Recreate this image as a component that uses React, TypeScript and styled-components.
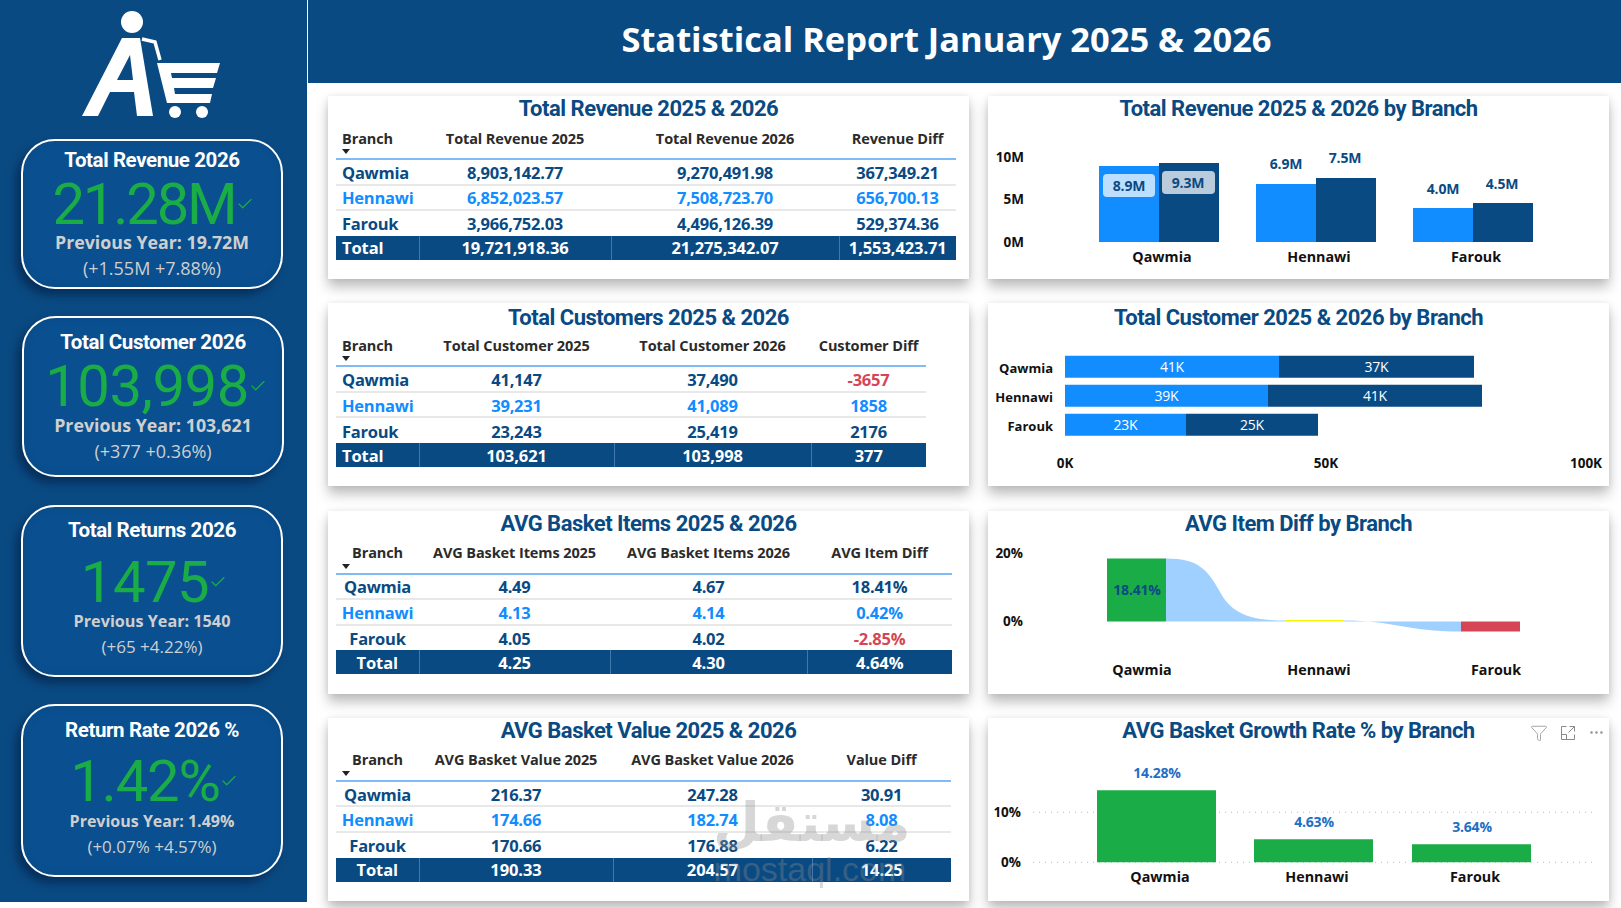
import React from 'react';
import styled, { createGlobalStyle } from 'styled-components';
import { Check, Filter, MoreHorizontal } from 'lucide-react';

const NAVY = '#0a4a82';
const SKY = '#118dff';
const GREEN = '#1aad47';
const RED = '#d64554';

const GlobalStyle = createGlobalStyle`
  html, body {
    margin: 0;
    padding: 0;
    background: #ffffff;
  }
  * {
    box-sizing: border-box;
  }
`;

const Page = styled.div`
  position: relative;
  width: 1621px;
  height: 908px;
  display: flex;
  align-items: flex-start;
  overflow: hidden;
  background: #ffffff;
  font-family: 'Open Sans', sans-serif;
`;

const Sidebar = styled.aside`
  width: 307px;
  height: 902px;
  flex-shrink: 0;
  background: ${NAVY};
  display: flex;
  flex-direction: column;
  padding-left: 21px;
`;

const LogoMark = styled.svg`
  display: block;
  width: 286px;
  height: 139px;
  flex-shrink: 0;
`;

const Kpi = styled.div<{ $height: number; $gap: number; $pad: number; $shift: number }>`
  width: 262px;
  height: ${p => p.$height}px;
  margin-top: ${p => p.$gap}px;
  margin-left: ${p => p.$shift}px;
  padding-top: ${p => p.$pad}px;
  background: #0a4f8f;
  border: 2.5px solid #ffffff;
  border-radius: 34px;
  box-shadow: -5px 6px 8px rgba(3, 30, 66, 0.6), inset 0 0 6px rgba(10, 74, 130, 0.8);
  display: flex;
  flex-direction: column;
  align-items: center;
  flex-shrink: 0;
`;

const KpiTitle = styled.div`
  height: 24px;
  line-height: 24px;
  font-family: 'Roboto', sans-serif;
  font-size: 20.5px;
  font-weight: 700;
  letter-spacing: -0.4px;
  color: #ffffff;
`;

const KpiValueRow = styled.div<{ $top: number; $after: number; $nudge: number }>`
  height: 60px;
  margin-top: ${p => p.$top}px;
  margin-bottom: ${p => p.$after}px;
  padding-left: ${p => p.$nudge}px;
  display: flex;
  align-items: center;
  color: ${GREEN};
`;

const KpiValue = styled.span<{ $track: number }>`
  font-family: 'Roboto', sans-serif;
  font-size: 58px;
  font-weight: 400;
  line-height: 60px;
  letter-spacing: ${p => p.$track}px;
`;

const KpiPrev = styled.div<{ $size: number }>`
  height: 24px;
  line-height: 24px;
  font-size: ${p => p.$size}px;
  font-weight: 700;
  color: #cfcfcf;
`;

const KpiDelta = styled.div<{ $size: number }>`
  margin-top: 2px;
  height: 24px;
  line-height: 24px;
  font-size: ${p => p.$size}px;
  font-weight: 400;
  color: #cfcfcf;
`;

const Main = styled.main`
  flex: 1;
  margin-left: 1px;
  display: flex;
  flex-direction: column;
`;

const Header = styled.header`
  height: 83px;
  background: ${NAVY};
  display: flex;
  align-items: center;
  justify-content: center;
  padding: 0 36px 7px 0;
`;

const HeaderTitle = styled.h1`
  margin: 0;
  font-family: 'Open Sans', sans-serif;
  font-size: 34.45px;
  font-weight: 700;
  color: #ffffff;
`;

const Board = styled.div`
  display: grid;
  grid-template-columns: 641px 621px;
  grid-auto-rows: 183px;
  column-gap: 19px;
  row-gap: 24.25px;
  padding: 13px 0 0 20px;
`;

const Card = styled.section`
  position: relative;
  background: #ffffff;
  box-shadow: 0 8px 12px rgba(0, 0, 0, 0.26), 0 0 6px rgba(0, 0, 0, 0.08);
`;

const CardTitle = styled.h2<{ $line?: number }>`
  margin: 0;
  height: 28px;
  line-height: ${p => p.$line || 26}px;
  text-align: center;
  font-family: 'Roboto', sans-serif;
  font-size: 22px;
  font-weight: 700;
  letter-spacing: -0.5px;
  color: ${NAVY};
`;

const Table = styled.table<{ $width: number }>`
  width: ${p => p.$width}px;
  margin-left: 8px;
  table-layout: fixed;
  border-collapse: collapse;
`;

const HeadCell = styled.th<{ $left?: boolean }>`
  position: relative;
  height: 35px;
  padding: 0 0 6px ${p => (p.$left ? '6px' : '0')};
  border-bottom: 2px solid #7fbcf5;
  text-align: ${p => (p.$left ? 'left' : 'center')};
  font-size: 14.5px;
  font-weight: 700;
  letter-spacing: -0.1px;
  color: #2b2b2b;
  white-space: nowrap;
`;

const SortCaret = styled.span`
  position: absolute;
  left: 6px;
  bottom: 4px;
  width: 0;
  height: 0;
  border-left: 4.5px solid transparent;
  border-right: 4.5px solid transparent;
  border-top: 5px solid #222222;
`;

const Cell = styled.td<{ $color: string; $left?: boolean }>`
  height: 25.6px;
  padding: 2px 0 0 ${p => (p.$left ? '6px' : '0')};
  border-bottom: 2px solid #e8e8e8;
  text-align: ${p => (p.$left ? 'left' : 'center')};
  font-size: 16.5px;
  font-weight: 700;
  letter-spacing: -0.25px;
  line-height: 20px;
  color: ${p => p.$color};
  white-space: nowrap;
  tr:nth-child(3) > & {
    border-bottom: 0;
  }
`;

const TotalCell = styled.td<{ $left?: boolean }>`
  height: 24px;
  padding: 1px 0 0 ${p => (p.$left ? '6px' : '0')};
  background: ${NAVY};
  border-left: 1px solid #3f78ad;
  text-align: ${p => (p.$left ? 'left' : 'center')};
  font-size: 16.5px;
  font-weight: 700;
  letter-spacing: -0.1px;
  line-height: 20px;
  color: #ffffff;
  white-space: nowrap;
  &:first-child {
    border-left: 0;
  }
`;

const ChartSvg = styled.svg`
  display: block;
  width: 621px;
  height: 154px;
  font-family: 'Open Sans', sans-serif;
`;

const AxisText = styled.text`
  font-size: 13.5px;
  font-weight: 700;
  fill: #111111;
`;

const CategoryText = styled.text<{ $size?: number }>`
  font-size: ${p => p.$size || 14.3}px;
  font-weight: 700;
  fill: #111111;
`;

const BarText = styled.text<{ $color?: string; $weight?: number }>`
  font-size: 14px;
  font-weight: ${p => p.$weight || 700};
  letter-spacing: -0.2px;
  fill: ${p => p.$color || NAVY};
`;

const VisualTools = styled.div`
  position: absolute;
  top: 6px;
  right: 4px;
  display: flex;
  align-items: center;
  gap: 12px;
  color: #8a8a8a;
`;

const Watermark = styled.div`
  position: absolute;
  left: 713px;
  top: 792px;
  width: 194px;
  text-align: center;
  color: rgba(140, 140, 140, 0.35);
  pointer-events: none;
`;

const WatermarkArabic = styled.div`
  height: 62px;
  line-height: 62px;
  font-family: 'DejaVu Sans', sans-serif;
  font-size: 54px;
  font-weight: 700;
  white-space: nowrap;
`;

const WatermarkLatin = styled.div`
  height: 30px;
  line-height: 30px;
  font-family: 'Liberation Sans', sans-serif;
  font-size: 34px;
  white-space: nowrap;
`;

const kpis = [
  { title: 'Total Revenue 2026', value: '21.28M', prev: 'Previous Year: 19.72M', delta: '(+1.55M +7.88%)', height: 150, gap: 0, pad: 7, top: 2, after: -4, track: -2.2, shift: 0, nudge: 2, prevSize: 17.8, deltaSize: 18 },
  { title: 'Total Customer 2026', value: '103,998', prev: 'Previous Year: 103,621', delta: '(+377 +0.36%)', height: 161, gap: 27, pad: 12, top: 2, after: -3, track: -0.5, shift: 1, nudge: 6, prevSize: 17.8, deltaSize: 18 },
  { title: 'Total Returns 2026', value: '1475', prev: 'Previous Year: 1540', delta: '(+65 +4.22%)', height: 172, gap: 28, pad: 11, top: 10, after: -3, track: -0.5, shift: 0, nudge: 4, prevSize: 16.2, deltaSize: 17 },
  { title: 'Return Rate 2026 %', value: '1.42%', prev: 'Previous Year: 1.49%', delta: '(+0.07% +4.57%)', height: 173, gap: 27, pad: 12, top: 9, after: -2, track: -1.2, shift: 0, nudge: 4, prevSize: 16, deltaSize: 17 },
];

type TableData = {
  title: string;
  titleLine?: number;
  left: boolean;
  cols: number[];
  heads: string[];
  rows: string[][];
  total: string[];
};

const tables: TableData[] = [
  {
    title: 'Total Revenue 2025 & 2026',
    left: true,
    cols: [83, 192, 228, 117],
    heads: ['Branch', 'Total Revenue 2025', 'Total Revenue 2026', 'Revenue Diff'],
    rows: [
      ['Qawmia', '8,903,142.77', '9,270,491.98', '367,349.21'],
      ['Hennawi', '6,852,023.57', '7,508,723.70', '656,700.13'],
      ['Farouk', '3,966,752.03', '4,496,126.39', '529,374.36'],
    ],
    total: ['Total', '19,721,918.36', '21,275,342.07', '1,553,423.71'],
  },
  {
    title: 'Total Customers 2025 & 2026',
    titleLine: 29,
    left: true,
    cols: [83, 195, 197, 115],
    heads: ['Branch', 'Total Customer 2025', 'Total Customer 2026', 'Customer Diff'],
    rows: [
      ['Qawmia', '41,147', '37,490', '-3657'],
      ['Hennawi', '39,231', '41,089', '1858'],
      ['Farouk', '23,243', '25,419', '2176'],
    ],
    total: ['Total', '103,621', '103,998', '377'],
  },
  {
    title: 'AVG Basket Items 2025 & 2026',
    left: false,
    cols: [83, 191, 197, 145],
    heads: ['Branch', 'AVG Basket Items 2025', 'AVG Basket Items 2026', 'AVG Item Diff'],
    rows: [
      ['Qawmia', '4.49', '4.67', '18.41%'],
      ['Hennawi', '4.13', '4.14', '0.42%'],
      ['Farouk', '4.05', '4.02', '-2.85%'],
    ],
    total: ['Total', '4.25', '4.30', '4.64%'],
  },
  {
    title: 'AVG Basket Value 2025 & 2026',
    left: false,
    cols: [83, 194, 199, 139],
    heads: ['Branch', 'AVG Basket Value 2025', 'AVG Basket Value 2026', 'Value Diff'],
    rows: [
      ['Qawmia', '216.37', '247.28', '30.91'],
      ['Hennawi', '174.66', '182.74', '8.08'],
      ['Farouk', '170.66', '176.88', '6.22'],
    ],
    total: ['Total', '190.33', '204.57', '14.25'],
  },
];

const Logo = () => (
  <LogoMark viewBox="21 0 286 139">
    <circle cx="132" cy="22" r="11" fill="#fff" />
    <path
      fill="#fff"
      fillRule="evenodd"
      d="M82 116 L122 38 L140 38 L153 116 L137 116 L134 92 L110 92 L98 116 Z M117 80 L133 80 L130 55 Z"
    />
    <path d="M142 39 L155 42 L160 60" fill="none" stroke="#fff" strokeWidth="3.5" />
    <path
      fill="#fff"
      d="M157 63 H220 L217 73 H171 L172 78 H216 L213 88 H174 L175 94 H212 L210 103 H167 Z"
    />
    <circle cx="175" cy="112" r="6" fill="#fff" />
    <circle cx="202" cy="112" r="6" fill="#fff" />
  </LogoMark>
);

const KpiCard = ({ kpi }: { kpi: (typeof kpis)[number] }) => (
  <Kpi $height={kpi.height} $gap={kpi.gap} $pad={kpi.pad} $shift={kpi.shift}>
    <KpiTitle>{kpi.title}</KpiTitle>
    <KpiValueRow $top={kpi.top} $after={kpi.after} $nudge={kpi.nudge}>
      <KpiValue $track={kpi.track}>{kpi.value}</KpiValue>
      <Check size={18} strokeWidth={1.6} />
    </KpiValueRow>
    <KpiPrev $size={kpi.prevSize}>{kpi.prev}</KpiPrev>
    <KpiDelta $size={kpi.deltaSize}>{kpi.delta}</KpiDelta>
  </Kpi>
);

const diffColor = (value: string, base: string) => (value.startsWith('-') ? RED : base);

const DataTable = ({ data }: { data: TableData }) => (
  <Card>
    <CardTitle $line={data.titleLine}>{data.title}</CardTitle>
    <Table $width={data.cols.reduce((a, b) => a + b, 0)}>
      <colgroup>
        {data.cols.map((w, i) => (
          <col key={i} width={w} />
        ))}
      </colgroup>
      <thead>
        <tr>
          {data.heads.map((h, i) => (
            <HeadCell key={h} $left={i === 0 && data.left}>
              {h}
              {i === 0 && <SortCaret />}
            </HeadCell>
          ))}
        </tr>
      </thead>
      <tbody>
        {data.rows.map(row => {
          const base = row[0] === 'Hennawi' ? SKY : NAVY;
          return (
            <tr key={row[0]}>
              {row.map((v, i) => (
                <Cell key={i} $left={i === 0 && data.left} $color={diffColor(v, base)}>
                  {v}
                </Cell>
              ))}
            </tr>
          );
        })}
        <tr>
          {data.total.map((v, i) => (
            <TotalCell key={i} $left={i === 0 && data.left}>
              {v}
            </TotalCell>
          ))}
        </tr>
      </tbody>
    </Table>
  </Card>
);

// chart numbers are page coordinates, each viewBox starts where its svg sits
const RevenueChart = () => {
  const bars = [
    [1099, 166, 1159, 163, 'Qawmia', 1162],
    [1256, 184, 1316, 178, 'Hennawi', 1319],
    [1413, 208, 1473, 203, 'Farouk', 1476],
  ] as const;
  return (
    <ChartSvg viewBox="988 124 621 154">
      {[['10M', 157], ['5M', 199], ['0M', 242]].map(([t, y]) => (
        <AxisText key={t} x={1024} y={y} textAnchor="end" dominantBaseline="central">{t}</AxisText>
      ))}
      {bars.map(([x1, y1, x2, y2, name, cx]) => (
        <g key={name}>
          <rect x={x1} y={y1} width={60} height={242 - y1} fill={SKY} />
          <rect x={x2} y={y2} width={60} height={242 - y2} fill={NAVY} />
          <CategoryText x={cx} y={256} textAnchor="middle" dominantBaseline="central">{name}</CategoryText>
        </g>
      ))}
      <rect x={1103} y={174} width={52} height={23} rx={4} fill="#fff" fillOpacity={0.72} />
      <rect x={1162} y={171} width={53} height={23} rx={4} fill="#fff" fillOpacity={0.72} />
      <BarText x={1129} y={185} textAnchor="middle" dominantBaseline="central">8.9M</BarText>
      <BarText x={1188} y={182} textAnchor="middle" dominantBaseline="central">9.3M</BarText>
      <BarText x={1286} y={163} textAnchor="middle" dominantBaseline="central">6.9M</BarText>
      <BarText x={1345} y={157} textAnchor="middle" dominantBaseline="central">7.5M</BarText>
      <BarText x={1443} y={188} textAnchor="middle" dominantBaseline="central">4.0M</BarText>
      <BarText x={1502} y={183} textAnchor="middle" dominantBaseline="central">4.5M</BarText>
    </ChartSvg>
  );
};

const CustomerChart = () => {
  const bars = [
    ['Qawmia', 356, 1279, 1474, '41K', '37K'],
    ['Hennawi', 385, 1268, 1482, '39K', '41K'],
    ['Farouk', 414, 1186, 1318, '23K', '25K'],
  ] as const;
  return (
    <ChartSvg viewBox="988 331.25 621 154">
      {bars.map(([name, y, mid, end, a, b]) => (
        <g key={name}>
          <CategoryText $size={13} x={1053} y={y + 12} textAnchor="end" dominantBaseline="central">{name}</CategoryText>
          <rect x={1065} y={y} width={mid - 1065} height={22} fill={SKY} />
          <rect x={mid} y={y} width={end - mid} height={22} fill={NAVY} />
          <BarText $color="#fff" $weight={500} x={(1065 + mid) / 2} y={y + 11} textAnchor="middle" dominantBaseline="central">{a}</BarText>
          <BarText $color="#fff" $weight={500} x={(mid + end) / 2} y={y + 11} textAnchor="middle" dominantBaseline="central">{b}</BarText>
        </g>
      ))}
      <AxisText x={1065} y={463} textAnchor="middle" dominantBaseline="central">0K</AxisText>
      <AxisText x={1326} y={463} textAnchor="middle" dominantBaseline="central">50K</AxisText>
      <AxisText x={1586} y={463} textAnchor="middle" dominantBaseline="central">100K</AxisText>
    </ChartSvg>
  );
};

const ItemDiffChart = () => (
  <ChartSvg viewBox="988 538.5 621 154">
    <AxisText x={1023} y={552} textAnchor="end" dominantBaseline="central">20%</AxisText>
    <AxisText x={1023} y={620} textAnchor="end" dominantBaseline="central">0%</AxisText>
    <path
      fill="#9fd0ff"
      d="M1166 558 C1200 558 1208 570 1222 595 C1234 614 1252 620 1285 620 L1285 621 L1166 621 Z"
    />
    <path
      fill="#9fd0ff"
      d="M1343 620 C1395 620 1405 631 1461 631 L1461 621 L1343 621 Z"
    />
    <rect x={1107} y={558} width={59} height={63} fill={GREEN} />
    <rect x={1285} y={619.5} width={58} height={1.5} fill="#f5f500" />
    <rect x={1461} y={621} width={59} height={10} fill={RED} />
    <BarText x={1137} y={589} textAnchor="middle" dominantBaseline="central">18.41%</BarText>
    <CategoryText x={1142} y={669} textAnchor="middle" dominantBaseline="central">Qawmia</CategoryText>
    <CategoryText x={1319} y={669} textAnchor="middle" dominantBaseline="central">Hennawi</CategoryText>
    <CategoryText x={1496} y={669} textAnchor="middle" dominantBaseline="central">Farouk</CategoryText>
  </ChartSvg>
);

const GrowthChart = () => {
  const bars = [
    ['Qawmia', 1097, 790, '14.28%', 1160],
    ['Hennawi', 1254, 839, '4.63%', 1317],
    ['Farouk', 1412, 844, '3.64%', 1475],
  ] as const;
  return (
    <ChartSvg viewBox="988 745.75 621 154">
      <AxisText x={1021} y={812} textAnchor="end" dominantBaseline="central">10%</AxisText>
      <AxisText x={1021} y={862} textAnchor="end" dominantBaseline="central">0%</AxisText>
      <line x1={1033} x2={1595} y1={812} y2={812} stroke="#b8b8b8" strokeDasharray="1 5" />
      <line x1={1033} x2={1595} y1={862} y2={862} stroke="#b8b8b8" strokeDasharray="1 5" />
      {bars.map(([name, x, top, label, cx]) => (
        <g key={name}>
          <rect x={x} y={top} width={119} height={862 - top} fill={GREEN} />
          <BarText $color="#1e6fc4" x={x + 60} y={top - 18} textAnchor="middle" dominantBaseline="central">{label}</BarText>
          <CategoryText x={cx} y={876} textAnchor="middle" dominantBaseline="central">{name}</CategoryText>
        </g>
      ))}
    </ChartSvg>
  );
};

const FocusIcon = () => (
  <svg width="16" height="16" viewBox="0 0 16 16" fill="none" stroke="currentColor" strokeWidth="1">
    <path d="M6.5 1.5H1.5V14.5H14.5V9.5M1.5 9.5H6.5V14.5M9.5 1.5H14.5V6.5M14.5 1.5L8.5 7.5" />
  </svg>
);

const App: React.FC = () => (
  <Page>
    <GlobalStyle />
    <Sidebar>
      <Logo />
      {kpis.map(k => (
        <KpiCard key={k.title} kpi={k} />
      ))}
    </Sidebar>
    <Main>
      <Header>
        <HeaderTitle>Statistical Report January 2025 &amp; 2026</HeaderTitle>
      </Header>
      <Board>
        <DataTable data={tables[0]} />
        <Card>
          <CardTitle>Total Revenue 2025 &amp; 2026 by Branch</CardTitle>
          <RevenueChart />
        </Card>
        <DataTable data={tables[1]} />
        <Card>
          <CardTitle $line={29}>Total Customer 2025 &amp; 2026 by Branch</CardTitle>
          <CustomerChart />
        </Card>
        <DataTable data={tables[2]} />
        <Card>
          <CardTitle>AVG Item Diff by Branch</CardTitle>
          <ItemDiffChart />
        </Card>
        <DataTable data={tables[3]} />
        <Card>
          <CardTitle>AVG Basket Growth Rate % by Branch</CardTitle>
          <GrowthChart />
          <VisualTools>
            <Filter size={18} strokeWidth={1} />
            <FocusIcon />
            <MoreHorizontal size={17} strokeWidth={1.5} />
          </VisualTools>
        </Card>
      </Board>
    </Main>
    <Watermark>
      <WatermarkArabic>مستقل</WatermarkArabic>
      <WatermarkLatin>mostaql.com</WatermarkLatin>
    </Watermark>
  </Page>
);

export default App;
